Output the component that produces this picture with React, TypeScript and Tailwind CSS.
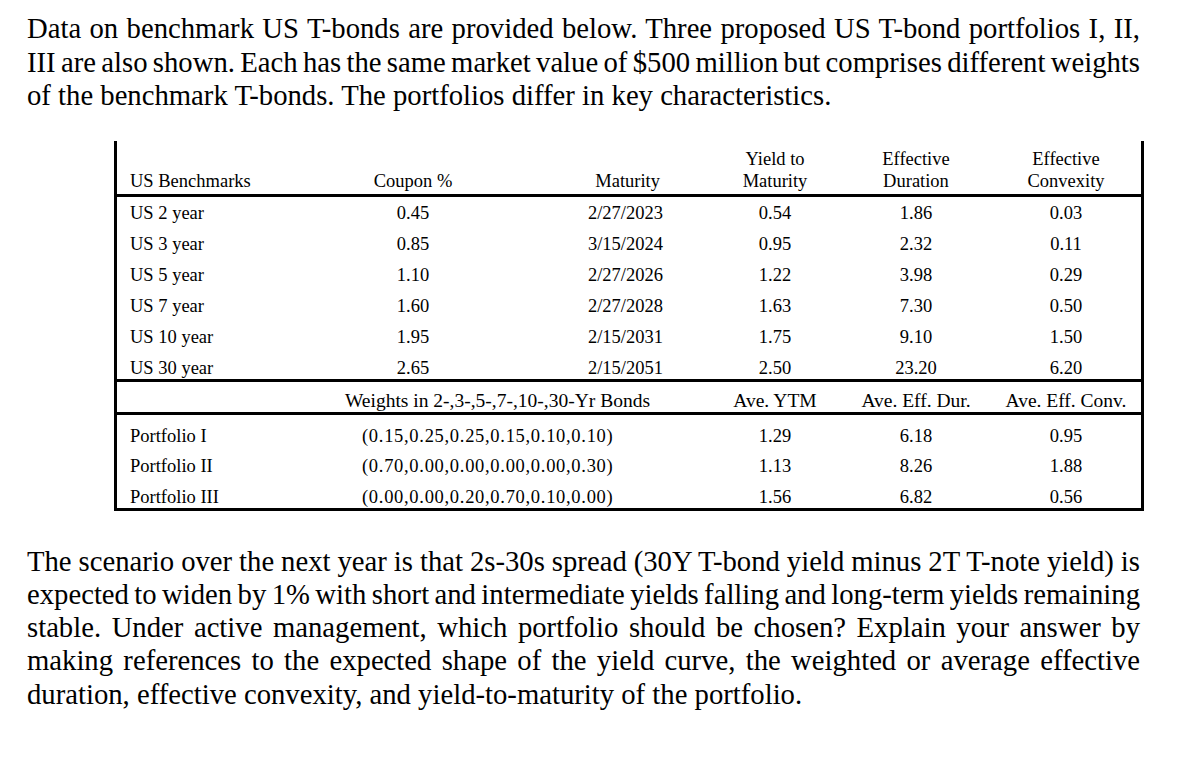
const serif = { fontFamily: '"Liberation Serif", "Times New Roman", serif' }

const benchmarks = [
  ['US 2 year', '0.45', '2/27/2023', '0.54', '1.86', '0.03'],
  ['US 3 year', '0.85', '3/15/2024', '0.95', '2.32', '0.11'],
  ['US 5 year', '1.10', '2/27/2026', '1.22', '3.98', '0.29'],
  ['US 7 year', '1.60', '2/27/2028', '1.63', '7.30', '0.50'],
  ['US 10 year', '1.95', '2/15/2031', '1.75', '9.10', '1.50'],
  ['US 30 year', '2.65', '2/15/2051', '2.50', '23.20', '6.20'],
]

const portfolios = [
  ['Portfolio I', '(0.15,0.25,0.25,0.15,0.10,0.10)', '1.29', '6.18', '0.95'],
  ['Portfolio II', '(0.70,0.00,0.00,0.00,0.00,0.30)', '1.13', '8.26', '1.88'],
  ['Portfolio III', '(0.00,0.00,0.20,0.70,0.10,0.00)', '1.56', '6.82', '0.56'],
]

const intro = [
  'Data on benchmark US T-bonds are provided below. Three proposed US T-bond portfolios I, II,',
  'III are also shown. Each has the same market value of $500 million but comprises different weights',
  'of the benchmark T-bonds. The portfolios differ in key characteristics.',
]

const question = [
  'The scenario over the next year is that 2s-30s spread (30Y T-bond yield minus 2T T-note yield) is',
  'expected to widen by 1% with short and intermediate yields falling and long-term yields remaining',
  'stable. Under active management, which portfolio should be chosen? Explain your answer by',
  'making references to the expected shape of the yield curve, the weighted or average effective',
  'duration, effective convexity, and yield-to-maturity of the portfolio.',
]

// keeps the source's line breaks; every line but the last is justified
function Para({ lines, className }: { lines: string[]; className?: string }) {
  return (
    <div className={`text-[28.7px] ${className ?? ''}`}>
      {lines.map((l, i) => (
        <div
          key={i}
          className={
            i < lines.length - 1
              ? 'whitespace-nowrap text-justify [text-align-last:justify] [word-spacing:-2px]'
              : 'whitespace-nowrap'
          }
        >
          {l}
        </div>
      ))}
    </div>
  )
}

const cols = 'grid grid-cols-[213px_166px_204px_150px_132px_159px]'

function BondTable() {
  return (
    <div className="ml-[87px] w-[1030px] border-x-[3px] border-b-[3px] border-black text-[18.5px] leading-[22px] text-black">
      <div className={`${cols} h-[53px] items-end pb-[2px]`}>
        <div className="pl-[13px]">US Benchmarks</div>
        <div className="text-center">Coupon %</div>
        <div className="text-right pr-[40px]">Maturity</div>
        <div className="text-center">Yield to<br />Maturity</div>
        <div className="text-center">Effective<br />Duration</div>
        <div className="text-center pl-[9px]">Effective<br />Convexity</div>
      </div>

      {/* benchmark rows sit a bit low in their band, as in the source */}
      <div className="h-[185px] border-t-[3px] border-black pt-[1px]">
        {benchmarks.map((r) => (
          <div key={r[0]} className={`${cols} h-[31px] items-center`}>
            <div className="pl-[13px]">{r[0]}</div>
            <div className="text-center">{r[1]}</div>
            <div className="text-right pr-[37px]">{r[2]}</div>
            <div className="text-center">{r[3]}</div>
            <div className="text-center">{r[4]}</div>
            <div className="text-center pl-[9px]">{r[5]}</div>
          </div>
        ))}
      </div>

      <div className={`${cols} h-[33px] items-end border-t-[3px] border-black text-[19.5px] leading-[22px]`}>
        <div />
        <div className="col-span-2 pl-[15px] whitespace-nowrap">Weights in 2-,3-,5-,7-,10-,30-Yr Bonds</div>
        <div className="text-center">Ave. YTM</div>
        <div className="text-center">Ave. Eff. Dur.</div>
        <div className="text-center pl-[9px] whitespace-nowrap">Ave. Eff. Conv.</div>
      </div>

      <div className="h-[96px] border-t-[3px] border-black pt-[6px]">
        {portfolios.map((r) => (
          <div key={r[0]} className={`${cols} h-[30.5px] items-center`}>
            <div className="pl-[13px]">{r[0]}</div>
            <div className="col-span-2 pl-[32px] tracking-[0.7px]">{r[1]}</div>
            <div className="text-center">{r[2]}</div>
            <div className="text-center">{r[3]}</div>
            <div className="text-center pl-[9px]">{r[4]}</div>
          </div>
        ))}
      </div>
    </div>
  )
}

export default function App() {
  return (
    <div className="w-[1197px] h-[760px] bg-white text-black" style={serif}>
      <div className="w-[1140px] pl-[27px] pt-[12px]">
        <Para lines={intro} className="leading-[33.5px]" />

        <div className="mt-[28px]">
          <BondTable />
        </div>

        <Para lines={question} className="mt-[34px] leading-[33.3px]" />
      </div>
    </div>
  )
}
